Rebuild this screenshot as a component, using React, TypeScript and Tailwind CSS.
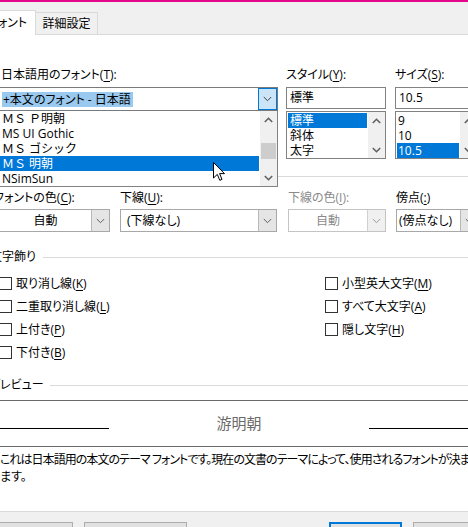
import React from 'react'

const U = ({ children }: { children: React.ReactNode }) => (
  <span className="underline underline-offset-[2px]">{children}</span>
)

const Chevron = ({ up = false, bold = false, color = '#5f5f5f' }: { up?: boolean; bold?: boolean; color?: string }) => (
  <svg width="9" height="6" viewBox="0 0 9 6">
    <polyline
      points={up ? '0.8,5 4.5,1.3 8.2,5' : '0.8,1 4.5,4.7 8.2,1'}
      fill="none"
      stroke={color}
      strokeWidth={bold ? 1.6 : 1}
    />
  </svg>
)

const Scrollbar = ({ thumb = false }: { thumb?: boolean }) => (
  <div className="w-[17px] shrink-0 bg-[#f0f0f0] flex flex-col">
    <div className="h-[17px] flex items-center justify-center"><Chevron up bold color="#606060" /></div>
    <div className="flex-1">
      {thumb && <div className="mt-[15px] mx-[1px] h-[16px] bg-[#cdcdcd]" />}
    </div>
    <div className="h-[17px] flex items-center justify-center"><Chevron bold color="#606060" /></div>
  </div>
)

type ComboProps = { text: string; center?: boolean; disabled?: boolean; width: string }

const Combo = ({ text, center, disabled, width }: ComboProps) => (
  <div className={`${width} mt-[3px] h-[23px] border flex bg-white ${disabled ? 'border-[#c4c4c4] text-[#8a8a8a]' : 'border-[#a8a8a8]'}`}>
    <div className={`flex-1 flex items-center whitespace-nowrap ${center ? 'justify-center' : 'pl-[6px]'}`}>{text}</div>
    <div className={`w-[18px] shrink-0 flex items-center justify-center border-l ${disabled ? 'bg-[#f0f0f0] border-[#d0d0d0]' : 'bg-[#e5e5e5] border-[#b8b8b8]'}`}>
      <Chevron color={disabled ? '#9a9a9a' : '#606060'} />
    </div>
  </div>
)

const Check = ({ label, mn, rest = ')' }: { label: string; mn: string; rest?: string }) => (
  <div className="h-[23px] flex items-center">
    <div className="w-[13px] h-[13px] shrink-0 border border-[#333333] bg-white" />
    <span className="ml-[4px] whitespace-nowrap">{label}(<U>{mn}</U>{rest}</span>
  </div>
)

const Cursor = () => (
  <svg width="13" height="20" viewBox="0 0 13 20" className="absolute left-[213px] top-[162px]">
    <path d="M0.5,0.5 L0.5,16 L4.3,12.4 L6.8,18.3 L9,17.4 L6.6,11.6 L11.5,11.6 Z" fill="#ffffff" stroke="#000000" strokeWidth="1" />
  </svg>
)

export default function App() {
  const fontItems = ['ＭＳ Ｐ明朝', 'MS UI Gothic', 'ＭＳ ゴシック', 'ＭＳ 明朝', 'NSimSun']

  return (
    <div className="relative w-[468px] h-[527px] overflow-hidden bg-white text-black text-[12px] leading-[16px] [font-family:'Open_Sans','Noto_Sans_CJK_JP',sans-serif] [font-feature-settings:'palt']">
      <div className="h-[2px] bg-[#e6068c]" />

      {/* tabs */}
      <div className="h-[33px] bg-[#f0f0f0] border-b border-[#d9d9d9] flex items-end">
        <div className="-ml-[20px] w-[56px] h-[25px] shrink-0 -mb-px bg-white border-t border-r border-[#d9d9d9] flex items-center justify-center relative">
          フォント
        </div>
        <div className="w-[62px] h-[22px] shrink-0 border-t border-r border-[#d9d9d9] flex items-center justify-center">
          詳細設定
        </div>
      </div>

      {/* content */}
      <div className="h-[476px] flex flex-col">
        <div className="mt-[32px] flex items-start">
          {/* font name */}
          <div className="-ml-px w-[279px] shrink-0 flex flex-col">
            <div className="pl-[2px] h-4 whitespace-nowrap">日本語用のフォント(<U>T</U>):</div>
            <div className="mt-1 h-[24px] border border-[#7a7a7a] flex">
              <div className="flex-1 flex items-center pl-[2px]">
                <span className="bg-[#99c9ef] leading-[15px] pl-px pr-[2px] whitespace-nowrap">+本文のフォント - 日本語</span>
              </div>
              <div className="w-[19px] shrink-0 bg-[#cce4f7] border border-[#0078d7] flex items-center justify-center">
                <Chevron color="#404040" />
              </div>
            </div>
            <div className="h-[76px] border border-t-0 border-[#828282] flex">
              <div className="flex-1 flex flex-col">
                {fontItems.map((f, i) => (
                  <div
                    key={f}
                    className={`h-[15px] leading-[15px] pl-[2px] mr-px whitespace-nowrap ${f.startsWith('ＭＳ') ? '[font-feature-settings:normal]' : ''} ${i === 3 ? 'bg-[#0078d7] text-white' : ''}`}
                  >
                    {f}
                  </div>
                ))}
              </div>
              <Scrollbar thumb />
            </div>
          </div>

          {/* style + size */}
          <div className="ml-[8px] shrink-0 flex flex-col">
            <div className="flex items-start">
              <div className="w-[100px] shrink-0 flex flex-col">
                <div className="h-4 whitespace-nowrap">スタイル(<U>Y</U>):</div>
                <div className="mt-1 h-[22px] border border-[#828282] flex items-center pl-[3px]">標準</div>
                <div className="mt-[2px] h-[48px] border border-[#828282] flex">
                  <div className="flex-1 flex flex-col p-px">
                    <div className="h-[15px] leading-[15px] pl-[2px] bg-[#0078d7] text-white">標準</div>
                    <div className="h-[15px] leading-[15px] pl-[2px]">斜体</div>
                    <div className="h-[15px] leading-[15px] pl-[2px]">太字</div>
                  </div>
                  <Scrollbar />
                </div>
              </div>
              <div className="ml-[9px] w-[83px] shrink-0 flex flex-col">
                <div className="h-4 whitespace-nowrap">サイズ(<U>S</U>):</div>
                <div className="mt-1 h-[22px] border border-[#828282] flex items-center pl-[3px]">10.5</div>
                <div className="mt-[2px] h-[48px] border border-[#828282] flex">
                  <div className="w-[64px] shrink-0 flex flex-col p-px">
                    <div className="h-[15px] leading-[15px] pl-[1px]">9</div>
                    <div className="h-[15px] leading-[15px] pl-[1px]">10</div>
                    <div className="h-[15px] leading-[15px] pl-[1px] bg-[#0078d7] text-white">10.5</div>
                  </div>
                  <Scrollbar />
                </div>
              </div>
            </div>
            <div className="-ml-[8px] mt-[17px] w-[200px] h-px bg-[#dadada]" />
          </div>
        </div>

        {/* colour / underline row */}
        <div className="mt-[3px] flex items-start">
          <div className="-ml-px shrink-0 flex flex-col">
            <div className="-ml-[5px] h-4 whitespace-nowrap">フォントの色(<U>C</U>):</div>
            <Combo text="自動" center width="w-[111px]" />
          </div>
          <div className="ml-[10px] shrink-0 flex flex-col">
            <div className="h-4 whitespace-nowrap">下線(<U>U</U>):</div>
            <Combo text="(下線なし)" width="w-[157px]" />
          </div>
          <div className="ml-[11px] shrink-0 flex flex-col">
            <div className="h-4 whitespace-nowrap text-[#8a8a8a]">下線の色(<U>I</U>):</div>
            <Combo text="自動" center disabled width="w-[98px]" />
          </div>
          <div className="ml-[10px] shrink-0 flex flex-col">
            <div className="h-4 whitespace-nowrap">傍点(<U>:</U>)</div>
            <div className="w-[90px] mt-[3px] h-[23px] border border-[#a8a8a8] flex">
              <div className="w-[63px] shrink-0 flex items-center pl-[2px] whitespace-nowrap">(傍点なし)</div>
              <div className="w-[18px] shrink-0 flex items-center justify-center border-l border-[#b8b8b8] bg-[#e5e5e5]">
                <Chevron />
              </div>
            </div>
          </div>
        </div>

        {/* effects */}
        <div className="mt-[17px] h-4 -ml-[10px] flex items-center">
          <span className="whitespace-nowrap">文字飾り</span>
          <div className="ml-[7px] flex-1 h-px bg-[#dadada]" />
        </div>
        <div className="mt-[7px] flex items-start">
          <div className="-ml-px w-[326px] shrink-0 flex flex-col">
            <Check label="取り消し線" mn="K" />
            <Check label="二重取り消し線" mn="L" />
            <Check label="上付き" mn="P" />
            <Check label="下付き" mn="B" />
          </div>
          <div className="shrink-0 flex flex-col">
            <Check label="小型英大文字" mn="M" />
            <Check label="すべて大文字" mn="A" />
            <Check label="隠し文字" mn="H" />
          </div>
        </div>

        {/* preview */}
        <div className="mt-[13px] h-4 -ml-[11px] flex items-center">
          <span className="whitespace-nowrap">プレビュー</span>
          <div className="ml-[6px] flex-1 h-px bg-[#dadada]" />
        </div>
        <div className="mt-[7px] w-[478px] h-[47px] shrink-0 border-y border-[#6a6a6a] flex items-start">
          <div className="w-[109px] shrink-0 h-px bg-black mt-[27px]" />
          <div className="flex-1 mt-[12px] text-center text-[15px] leading-[20px] text-[#6a6a6a] [font-feature-settings:normal]">游明朝</div>
          <div className="w-[109px] shrink-0 h-px bg-black mt-[27px]" />
        </div>
        <div className="mt-[4px] leading-[17px] whitespace-nowrap">
          <div className="tracking-[-0.95px]">これは日本語用の本文のテーマ フォントです。現在の文書のテーマによって、使用されるフォントが決ま</div>
          <div>ます。</div>
        </div>
      </div>

      {/* footer */}
      <div className="h-[16px] bg-[#f0f0f0] border-t border-[#d9d9d9] flex items-start">
        <div className="-ml-[11px] mt-[10px] w-[84px] h-[24px] shrink-0 border border-[#adadad] bg-[#e1e1e1] flex items-center justify-center whitespace-nowrap">既定に設定(<U>D</U>)</div>
        <div className="ml-[11px] mt-[10px] w-[103px] h-[24px] shrink-0 border border-[#adadad] bg-[#e1e1e1] flex items-center justify-center whitespace-nowrap">文字の効果(<U>E</U>)...</div>
        <div className="ml-[142px] mt-[10px] w-[73px] h-[24px] shrink-0 border-2 border-[#0078d7] bg-[#e1e1e1] flex items-center justify-center">OK</div>
        <div className="ml-[11px] mt-[10px] w-[75px] h-[24px] shrink-0 border border-[#adadad] bg-[#e1e1e1] flex items-center justify-center whitespace-nowrap">キャンセル</div>
      </div>

      <Cursor />
    </div>
  )
}
